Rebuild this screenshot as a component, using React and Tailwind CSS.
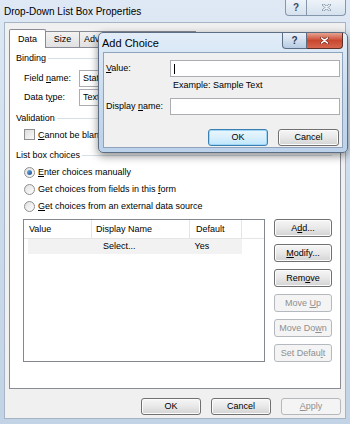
import React from "react";

const font = "font-[family-name:'Liberation_Sans',Arial,sans-serif]";

function Btn({ children, disabled, focused, className = "" }) {
  let cls =
    "flex items-center justify-center rounded-[3px] border text-[9px] leading-none ";
  if (disabled) {
    cls += "border-[#b5b9bd] bg-[#f4f4f4] text-[#8f8f8f] ";
  } else if (focused) {
    cls +=
      "border-[#3c7fb1] bg-gradient-to-b from-[#eaf6fd] via-[#d9f0fc] to-[#bee6fd] text-black shadow-[inset_0_0_0_1px_#9fd6f7] ";
  } else {
    cls +=
      "border-[#707070] bg-gradient-to-b from-[#f6f6f6] via-[#e8e8e8] to-[#d3d3d3] text-black shadow-[inset_0_0_0_1px_#fcfcfc] ";
  }
  return (
    <div className={cls + className}>
      <span className="whitespace-pre">{children}</span>
    </div>
  );
}

function U({ children }) {
  return <span className="underline underline-offset-[1px] decoration-[0.5px]">{children}</span>;
}

function XIcon({ color = "#ffffff", stroke = "#5a1a10", size = 9 }) {
  return (
    <svg width={size} height={size - 2} viewBox="0 0 10 8">
      <path d="M1.5 1 L8.5 7 M8.5 1 L1.5 7" stroke={stroke} strokeWidth="3" strokeLinecap="round" />
      <path d="M1.5 1 L8.5 7 M8.5 1 L1.5 7" stroke={color} strokeWidth="1.6" strokeLinecap="round" />
    </svg>
  );
}

function Radio({ checked }) {
  return (
    <div className="shrink-0 w-[11px] h-[11px] rounded-full border border-[#8f8f8f] bg-gradient-to-br from-[#e0e0e0] to-[#ffffff] flex items-center justify-center">
      {checked && (
        <div className="w-[5px] h-[5px] rounded-full bg-gradient-to-br from-[#6fb2e6] to-[#1b4f8f]" />
      )}
    </div>
  );
}

function GroupLabel({ children, lineWidth }) {
  return (
    <div className="flex items-center h-[11px] pl-[6px]">
      <span className="shrink-0 whitespace-nowrap text-[9px] leading-none text-black">{children}</span>
      <div className={"shrink-0 ml-[2px] h-px bg-[#d5dfe5] " + lineWidth} />
    </div>
  );
}

export default function App() {
  return (
    <div className={"relative w-[350px] h-[424px] overflow-hidden bg-gradient-to-b from-[#dfe9f5] via-[#cbdbec] to-[#c2d3e6] " + font}>
      {/* outer title bar */}
      <div className="h-[22px] flex items-start justify-between">
        <span className="pl-[4px] pt-[7px] text-[10px] leading-none text-black">
          Drop-Down List Box Properties
        </span>
        <div className="flex mr-[4px]">
          <div className="w-[22px] h-[16px] rounded-bl-[4px] border border-t-0 border-[#8797ab] bg-gradient-to-b from-[#eef3f9] to-[#d5e1ee] flex items-center justify-center text-[10px] font-bold text-[#3b4b5e] leading-none">
            ?
          </div>
          <div className="w-[39px] h-[16px] rounded-br-[4px] border border-t-0 border-l-0 border-[#8797ab] bg-gradient-to-b from-[#eef3f9] to-[#d5e1ee] flex items-center justify-center">
            <XIcon color="#eef3f9" stroke="#6a7a8e" />
          </div>
        </div>
      </div>

      {/* outer body */}
      <div className="ml-[4px] w-[342px] h-[397px] bg-[#f0f0f0] border border-[#a6b5c6] flex flex-col px-[4px]">
        {/* tabs */}
        <div className="flex items-end h-[24px] pt-[5px]">
          <div className="relative z-10 w-[37px] h-[19px] -mb-px bg-white border border-b-0 border-[#898c95] rounded-t-[2px] text-[9px] leading-none text-black flex items-center justify-center">
            <span>Data</span>
          </div>
          <div className="w-[34px] h-[16px] bg-gradient-to-b from-[#f2f2f2] to-[#e1e1e1] border border-l-0 border-b-0 border-[#898c95] text-[9px] leading-none text-black flex items-center justify-center">
            <span>Size</span>
          </div>
          <div className="w-[60px] h-[16px] bg-gradient-to-b from-[#f2f2f2] to-[#e1e1e1] border border-l-0 border-b-0 border-[#898c95] text-[9px] leading-none text-black flex items-center pl-[4px]">
            <span>Advanced</span>
          </div>
          <div className="w-[56px] h-[16px] bg-gradient-to-b from-[#f2f2f2] to-[#e1e1e1] border border-l-0 border-b-0 border-[#898c95]" />
        </div>

        {/* panel */}
        <div className="w-[332px] h-[342px] bg-white border border-[#898c95] flex flex-col pt-[5px]">
          <GroupLabel lineWidth="w-[290px]">Binding</GroupLabel>
          <div className="mt-[6px] flex items-center h-[17px] pl-[14px]">
            <span className="w-[55px] text-[9px] leading-none">
              Field <U>n</U>ame:
            </span>
            <div className="w-[180px] h-[17px] border border-[#abadb3] bg-white text-[9px] leading-none flex items-center pl-[3px]">
              <span>Status</span>
            </div>
          </div>
          <div className="mt-[2px] flex items-center h-[17px] pl-[14px]">
            <span className="w-[55px] text-[9px] leading-none">
              Data t<U>y</U>pe:
            </span>
            <div className="w-[180px] h-[17px] border border-[#abadb3] bg-white text-[9px] leading-none flex items-center pl-[3px]">
              <span>Text (string)</span>
            </div>
          </div>
          <div className="mt-[7px]">
            <GroupLabel lineWidth="w-[280px]">Validation</GroupLabel>
          </div>
          <div className="mt-[4px] flex items-center h-[12px] pl-[14px]">
            <div className="shrink-0 w-[11px] h-[11px] border border-[#8f8f8f] bg-gradient-to-br from-[#dcdcdc] to-[#fbfbfb]" />
            <span className="ml-[3px] mt-[2px] text-[9px] leading-none whitespace-nowrap">
              <U>C</U>annot be blank
            </span>
          </div>
          <div className="mt-[10px]">
            <GroupLabel lineWidth="w-[250px]">List box choices</GroupLabel>
          </div>
          <div className="mt-[5px] flex flex-col gap-[5px] pl-[14px]">
            <div className="flex items-center h-[12px]">
              <Radio checked />
              <span className="ml-[3px] text-[9px] leading-none whitespace-nowrap">
                <U>E</U>nter choices manually
              </span>
            </div>
            <div className="flex items-center h-[12px]">
              <Radio />
              <span className="ml-[3px] text-[9px] leading-none whitespace-nowrap">
                Get choices from fields in this <U>f</U>orm
              </span>
            </div>
            <div className="flex items-center h-[12px]">
              <Radio />
              <span className="ml-[3px] text-[9px] leading-none whitespace-nowrap">
                <U>G</U>et choices from an external data source
              </span>
            </div>
          </div>

          {/* table + buttons */}
          <div className="mt-[7px] flex pl-[13px]">
            <div className="w-[242px] h-[143px] border border-[#828790] bg-white flex flex-col">
              <div className="flex h-[19px] border-b border-[#e5e5e5] text-[9px] leading-none">
                <div className="w-[68px] border-r border-[#e5e5e5] flex items-center pl-[5px]"><span>Value</span></div>
                <div className="w-[98px] border-r border-[#e5e5e5] flex items-center pl-[4px]"><span>Display Name</span></div>
                <div className="w-[52px] border-r border-[#e5e5e5] flex items-center pl-[6px]"><span>Default</span></div>
              </div>
              <div className="ml-[4px] w-[214px] h-[15px] bg-[#f2f2f2] flex items-center text-[9px] leading-none">
                <span className="ml-[75px]">Select...</span>
                <span className="ml-[59px]">Yes</span>
              </div>
            </div>
            <div className="ml-[9px] flex flex-col gap-[7px]">
              <Btn className="w-[58px] h-[18px]">
                A<U>d</U>d...
              </Btn>
              <Btn className="w-[58px] h-[18px]">
                <U>M</U>odify...
              </Btn>
              <Btn className="w-[58px] h-[18px]">
                Rem<U>o</U>ve
              </Btn>
              <Btn disabled className="w-[58px] h-[18px]">
                Move <U>U</U>p
              </Btn>
              <Btn disabled className="w-[58px] h-[18px]">
                Move Do<U>w</U>n
              </Btn>
              <Btn disabled className="w-[58px] h-[18px]">
                Set Defau<U>l</U>t
              </Btn>
            </div>
          </div>
        </div>

        {/* bottom buttons */}
        <div className="mt-[9px] flex justify-end gap-[10px]">
          <Btn className="w-[60px] h-[17px]">OK</Btn>
          <Btn className="w-[60px] h-[17px]">Cancel</Btn>
          <Btn disabled className="w-[60px] h-[17px]">
            <U>A</U>pply
          </Btn>
        </div>
      </div>

      {/* Add Choice dialog */}
      <div className="absolute left-[98px] top-[32px] w-[250px] h-[121px] rounded-[5px] border border-[#5d6e84] bg-gradient-to-b from-[#e2edf8] via-[#c9dcf0] to-[#bcd2ea] shadow-[0_3px_8px_rgba(0,0,0,0.45)] flex flex-col">
        <div className="h-[19px] flex items-start justify-between">
          <span className="pl-[3px] pt-[5px] text-[11px] leading-none text-black">Add Choice</span>
          <div className="flex mr-[4px]">
            <div className="w-[25px] h-[16px] rounded-bl-[4px] border border-t-0 border-[#5d6e84] bg-gradient-to-b from-[#e9f0f8] via-[#d2dfee] to-[#b7cbe2] flex items-center justify-center text-[10px] font-bold text-[#2d3c50] leading-none">
              ?
            </div>
            <div className="w-[36px] h-[16px] rounded-br-[4px] border border-t-0 border-l-0 border-[#5d3127] bg-gradient-to-b from-[#e6a291] via-[#c9462f] to-[#d7664d] flex items-center justify-center">
              <XIcon />
            </div>
          </div>
        </div>
        <div className="ml-[4px] w-[240px] h-[96px] bg-[#f0f0f0] border border-[#8ea3bd] flex flex-col">
          <div className="mt-[7px] flex items-center h-[17px] pl-[2px]">
            <span className="w-[64px] text-[9px] leading-none">
              <U>V</U>alue:
            </span>
            <div className="w-[170px] h-[17px] border border-[#abadb3] bg-white flex items-center pl-[3px]">
              <div className="w-px h-[10px] bg-black" />
            </div>
          </div>
          <div className="mt-[3px] pl-[69px] h-[11px] flex items-center text-[9px] leading-none">
            <span>Example: Sample Text</span>
          </div>
          <div className="mt-[7px] flex items-center h-[17px] pl-[2px]">
            <span className="w-[64px] text-[9px] leading-none">
              Display <U>n</U>ame:
            </span>
            <div className="w-[170px] h-[17px] border border-[#abadb3] bg-white" />
          </div>
          <div className="mt-[14px] flex justify-end gap-[10px] pr-[3px]">
            <Btn focused className="w-[60px] h-[17px]">OK</Btn>
            <Btn className="w-[61px] h-[17px]">Cancel</Btn>
          </div>
        </div>
      </div>
    </div>
  );
}
